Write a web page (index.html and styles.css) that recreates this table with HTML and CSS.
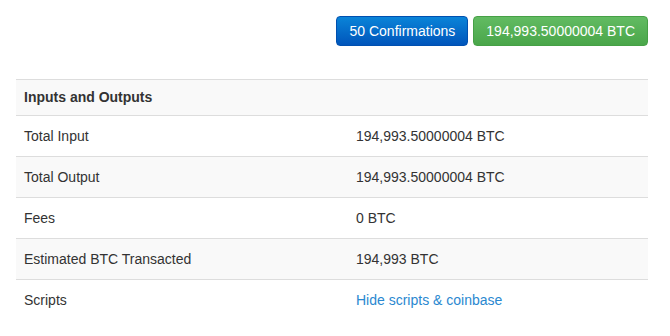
FILE: index.html
```html
<!DOCTYPE html>
<html lang="en">
<head>
<meta charset="UTF-8">
<meta name="viewport" content="width=device-width,initial-scale=1">
<title>Transaction</title>
<link rel="stylesheet" href="styles.css">
</head>
<body>

<div class="page">
  <div class="tx-buttons">
    <button class="btn btn-primary">50 Confirmations</button>
    <button class="btn btn-success">194,993.50000004 BTC</button>
  </div>

  <table class="tx-table">
    <tbody>
      <tr class="head"><th colspan="2">Inputs and Outputs</th></tr>
      <tr><td class="label">Total Input</td><td>194,993.50000004 BTC</td></tr>
      <tr><td class="label">Total Output</td><td>194,993.50000004 BTC</td></tr>
      <tr><td class="label">Fees</td><td>0 BTC</td></tr>
      <tr><td class="label">Estimated BTC Transacted</td><td>194,993 BTC</td></tr>
      <tr><td class="label">Scripts</td><td><a href="#" class="link">Hide scripts &amp; coinbase</a></td></tr>
    </tbody>
  </table>
</div>

</body>
</html>
```

FILE: styles.css
```css
:root{
  --text:    #333333;
  --border:  #dddddd;
  --stripe:  #f9f9f9;
  --link:    #2a88d0;
}
*{box-sizing:border-box;margin:0;padding:0}
body{
  font-family:'Liberation Sans',Arial,sans-serif;
  font-size:14px;
  line-height:20px;
  color:var(--text);
  background:#fff;
}
.page{
  padding:16px 22px 0 16px;
}

/* ---------- botones ---------- */
.tx-buttons{
  display:flex;
  justify-content:flex-end;
  gap:5px;
  margin-bottom:33px;
}
.btn{
  font-family:inherit;
  font-size:14px;
  line-height:20px;
  color:#fff;
  border:1px solid transparent;
  border-radius:4px;
  padding:4px 12px;
  height:30px;
  cursor:pointer;
}
.btn-primary{
  background:linear-gradient(#0a84d8,#0055bb);
  border-color:#0050b0;
}
.btn-success{
  background:linear-gradient(#62bb62,#4aa64a);
  border-color:#46a046;
}

/* ---------- tabla ---------- */
.tx-table{
  width:100%;
  border-collapse:collapse;
}
.tx-table th,
.tx-table td{
  text-align:left;
  padding:10px 8px;
  border-top:1px solid var(--border);
  vertical-align:top;
}
.tx-table tr.head th{
  padding:7px 8px 8px;
  font-weight:bold;
}
.tx-table tr:nth-child(odd){background:var(--stripe)}
.tx-table td.label{width:332px}
.link{color:var(--link);text-decoration:none}
```
